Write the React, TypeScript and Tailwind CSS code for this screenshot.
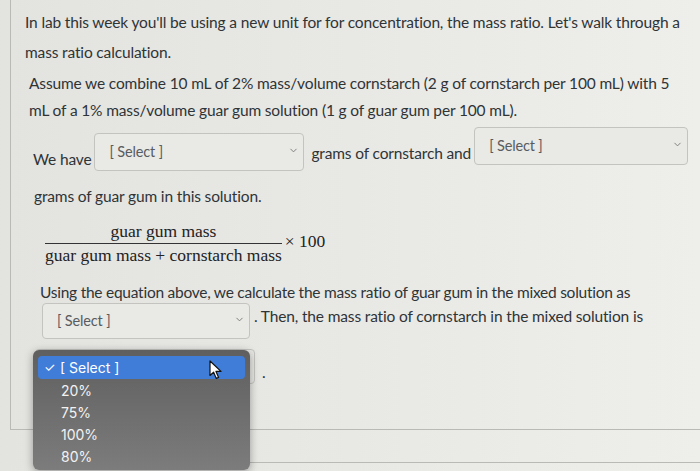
import React from "react";
import { ChevronDown } from "lucide-react";

const body = "font-['Lato','Open_Sans',sans-serif] text-[15.5px] tracking-[-0.15px] text-[#2f3437]";

function Select({ className }: { className: string }) {
  return (
    <div className={`flex items-center justify-between border border-[#c3c3bf] rounded-[4px] bg-[#e9e9e6] pl-[14px] pr-[4px] ${className}`}>
      <span className="text-[14.5px] text-[#585c60]">[ Select ]</span>
      <ChevronDown size={11} strokeWidth={2} className="text-[#777] -mt-[4px]" />
    </div>
  );
}

function Cursor() {
  return (
    <svg width="14" height="20" viewBox="0 0 14 20" className="absolute left-[209px] top-[360px]">
      <path d="M1 1 L1 15.5 L4.6 12.2 L7.3 18.4 L9.6 17.4 L7 11.4 L12 11.4 Z" fill="#fff" stroke="#111" strokeWidth="1.2" strokeLinejoin="round" />
    </svg>
  );
}

export default function App() {
  const options = ["20%", "75%", "100%", "80%"];

  return (
    <div className={`relative w-[700px] h-[471px] overflow-hidden bg-gradient-to-r from-[#e3e3e0] via-[#e8e8e5] to-[#eeeeeb] ${body}`}>
      <div className="ml-[10px] h-[430px] border-l border-b border-[#b9b9b5] whitespace-nowrap">
        <p className="pt-[7px] pl-[14px] leading-[30px]">
          In lab this week you'll be using a new unit for for concentration, the mass ratio. Let's walk through a
          <br />
          mass ratio calculation.
        </p>

        <p className="mt-[3px] pl-[18px] leading-[27px]">
          Assume we combine 10 mL of 2% mass/volume cornstarch (2 g of cornstarch per 100 mL) with 5
          <br />
          mL of a 1% mass/volume guar gum solution (1 g of guar gum per 100 mL).
        </p>

        <div className="mt-[7px] pl-[22px] flex items-start h-[40px]">
          <span className="leading-[24px] mt-[16px]">We have</span>
          <Select className="ml-[3px] w-[210px] h-[38px] mt-[2px]" />
          <span className="ml-[7px] leading-[24px] mt-[10px]">grams of cornstarch and</span>
          <Select className="ml-[3px] w-[214px] h-[38px] -mt-[4px]" />
        </div>

        <p className="mt-[12px] pl-[23px] leading-[27px]">grams of guar gum in this solution.</p>

        <div className="mt-[11px] pl-[34px] flex items-center font-['Liberation_Serif','DejaVu_Serif',serif] text-[17.5px] tracking-normal text-[#222]">
          <div className="flex flex-col items-center">
            <span className="leading-[20px] pb-[2px]">guar gum mass</span>
            <span className="w-full border-t border-[#333]"></span>
            <span className="leading-[20px] pt-[1px]">guar gum mass + cornstarch mass</span>
          </div>
          <span className="ml-[3px] -mt-[4px]">× 100</span>
        </div>

        <p className="mt-[14px] pl-[29px] leading-[26px] tracking-[-0.25px]">
          Using the equation above, we calculate the mass ratio of guar gum in the mixed solution as
        </p>

        <div className="pl-[31px] flex items-start">
          <Select className="mt-[-2px] w-[208px] h-[36px]" />
          <span className="ml-[4px] leading-[26px] -mt-[2px]">. Then, the mass ratio of cornstarch in the mixed solution is</span>
        </div>

        <div className="mt-[10px] pl-[24px] flex items-end">
          <div className="w-[220px] h-[35px] border border-[#c3c3bf] rounded-[4px]"></div>
          <span className="ml-[7px] leading-[24px]">.</span>
        </div>
      </div>

      <div className="absolute left-[250px] right-0 top-[462px] border-t border-[#b9b9b5]"></div>

      <div className="absolute left-[33px] top-[350px] w-[217px] h-[120px] rounded-[6px] bg-gradient-to-b from-[#5f5f5f] to-[#7c7c7c] shadow-[0_2px_8px_rgba(0,0,0,0.35)] px-[5px] pt-[6px] font-['Inter','Open_Sans',sans-serif] text-[14px] tracking-normal text-white">
        <div className="flex items-center h-[23px] rounded-[4px] bg-[#3f7dd8] pl-[6px]">
          <span className="w-[16px] text-[13px]">✓</span>
          <span>[ Select ]</span>
        </div>
        {options.map(o => (
          <div key={o} className="h-[22px] flex items-center pl-[23px] text-[#f2f2f2]">
            {o}
          </div>
        ))}
      </div>

      <Cursor />
    </div>
  );
}
